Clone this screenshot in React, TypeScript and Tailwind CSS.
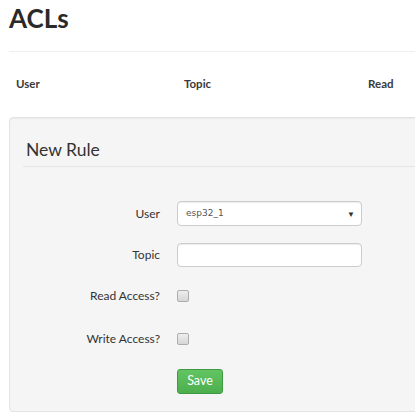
import React from "react";

export default function App() {
  return (
    <div className="w-[415px] h-[419px] overflow-hidden bg-white font-['Lato','Noto_Sans',sans-serif] text-[#333]">
      <div className="w-[500px] pl-[9px]">
        <h1 className="mt-[5px] text-[26px] leading-none font-bold text-[#2a2a2a]">ACLs</h1>
        <div className="mt-[20px] border-t border-[#eeeeee]" />
        <div className="mt-[26px] grid grid-cols-[168px_184px_1fr] pl-[7px] text-[11.5px] leading-none font-bold text-[#3a3a3a]">
          <div>User</div>
          <div>Topic</div>
          <div>Read</div>
        </div>
        <div className="mt-[27px] h-[295px] rounded-[4px] border border-[#e3e3e3] bg-[#f5f5f5] shadow-[inset_0_1px_1px_rgba(0,0,0,0.05)]">
          <div className="ml-[13px] mt-[23px] border-b border-[#e5e5e5] pb-[8px] pl-[3px]">
            <div className="text-[17.5px] leading-none text-[#333]">New Rule</div>
          </div>
          <div className="mt-[34px] flex h-[25px] items-center">
            <label className="w-[150px] text-right text-[12px] leading-none">User</label>
            <div className="ml-[17px] flex h-[25px] w-[185px] items-center justify-between rounded-[4px] border border-[#cccccc] bg-white pl-[8px] pr-[6px] shadow-[inset_0_1px_1px_rgba(0,0,0,0.075)]">
              <span className="font-['DejaVu_Sans',sans-serif] text-[9px] text-[#555]">esp32_1</span>
              <span className="text-[8px] text-[#333]">▼</span>
            </div>
          </div>
          <div className="mt-[17px] flex h-[24px] items-center">
            <label className="w-[150px] text-right text-[12px] leading-none">Topic</label>
            <div className="ml-[17px] h-[24px] w-[185px] rounded-[4px] border border-[#cccccc] bg-white shadow-[inset_0_1px_1px_rgba(0,0,0,0.075)]" />
          </div>
          <div className="mt-[17px] flex h-[24px] items-center">
            <label className="w-[150px] text-right text-[12px] leading-none">Read Access?</label>
            <input
              type="checkbox"
              className="ml-[17px] h-[12px] w-[12px] appearance-none rounded-[2px] border border-[#adadad] bg-gradient-to-b from-[#eeeeee] to-[#d6d6d6]"
            />
          </div>
          <div className="mt-[19px] flex h-[24px] items-center">
            <label className="w-[150px] text-right text-[12px] leading-none">Write Access?</label>
            <input
              type="checkbox"
              className="ml-[17px] h-[12px] w-[12px] appearance-none rounded-[2px] border border-[#adadad] bg-gradient-to-b from-[#eeeeee] to-[#d6d6d6]"
            />
          </div>
          <div className="mt-[18px] flex h-[25px] items-center">
            <div className="w-[150px]" />
            <button className="ml-[17px] h-[25px] w-[46px] rounded-[3px] border border-[#3e9a3e] bg-gradient-to-b from-[#62c462] to-[#4cae4c] text-[12.5px] leading-none text-white">
              Save
            </button>
          </div>
        </div>
      </div>
    </div>
  );
}
